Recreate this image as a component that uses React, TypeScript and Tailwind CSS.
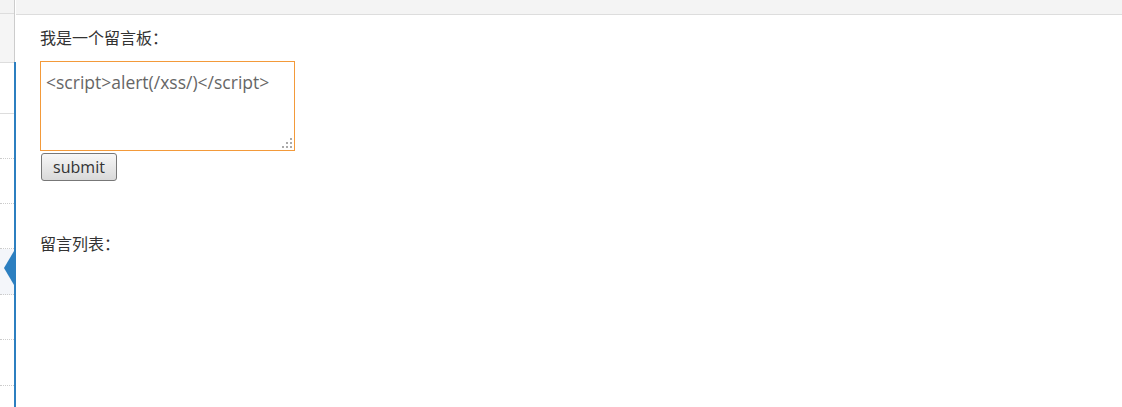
const font = { fontFamily: '"Open Sans", "Noto Sans CJK SC", sans-serif' };

function Sidebar() {
  return (
    <aside className="flex w-[14px] shrink-0 flex-col">
      <div className="h-[14px] border-b border-[#ddd] bg-[#f3f3f3]" />
      <div className="h-[49px] border-b border-[#ddd] bg-[#f5f5f5]" />
      <div className="h-[51px] border-b border-[#ddd] bg-white" />
      <div className="h-[45px] border-b border-dotted border-[#ccc]" />
      <div className="h-[45px] border-b border-dotted border-[#ccc]" />
      <div className="h-[45px] border-b border-dotted border-[#ccc]" />
      <div className="relative h-[46px] border-b border-dotted border-[#ccc] bg-[#f4f6fa]">
        <svg className="absolute right-0 top-[2px]" width="10" height="36" viewBox="0 0 10 36">
          <polygon points="10,0 0,17 10,34" fill="#2c7fc0" />
        </svg>
      </div>
      <div className="h-[45px] border-b border-dotted border-[#ccc]" />
      <div className="h-[46px] border-b border-dotted border-[#ccc]" />
      <div className="flex-1" />
    </aside>
  );
}

// dotted resize grip like the old IE/Firefox one
function Grip() {
  const dots = [
    [8, 0],
    [4, 4],
    [8, 4],
    [0, 8],
    [4, 8],
    [8, 8],
  ];
  return (
    <svg className="pointer-events-none absolute bottom-[3px] right-[3px]" width="10" height="10" viewBox="0 0 10 10">
      {dots.map(([x, y]) => (
        <rect key={`${x}-${y}`} x={x} y={y} width="2" height="2" fill="#aaa" />
      ))}
    </svg>
  );
}

export default function App() {
  return (
    <div className="flex h-[407px] w-[1122px] overflow-hidden bg-white text-[#333]" style={font}>
      <Sidebar />
      <div className="flex w-[2px] shrink-0 flex-col">
        <div className="h-[62px] w-[1px] bg-[#ccc]" />
        <div className="flex-1 bg-[#2c7fc0]" />
      </div>
      <main className="flex flex-1 flex-col">
        <div className="h-[15px] border-b border-[#ddd] bg-[#f4f4f4]" />
        <div className="flex flex-col items-start pl-[24px]">
          <p className="mt-[12px] text-[16px] leading-[22px]">我是一个留言板：</p>
          <div className="relative mt-[12px]">
            <textarea
              defaultValue="<script>alert(/xss/)</script>"
              className="block h-[90px] w-[255px] resize-none border border-[#f39a3a] px-[5px] py-[9px] text-[17.5px] leading-[23px] text-[#666] outline-none"
              style={font}
            />
            <Grip />
          </div>
          <button
            type="button"
            className="ml-[1px] mt-[2px] h-[28px] w-[76px] rounded-[3px] border border-[#777] bg-gradient-to-b from-[#f7f7f7] to-[#d9d9d9] text-[16px] leading-[20px] text-[#333]"
            style={font}
          >
            submit
          </button>
          <p className="mt-[52px] text-[16px] leading-[22px]">留言列表：</p>
        </div>
      </main>
    </div>
  );
}
